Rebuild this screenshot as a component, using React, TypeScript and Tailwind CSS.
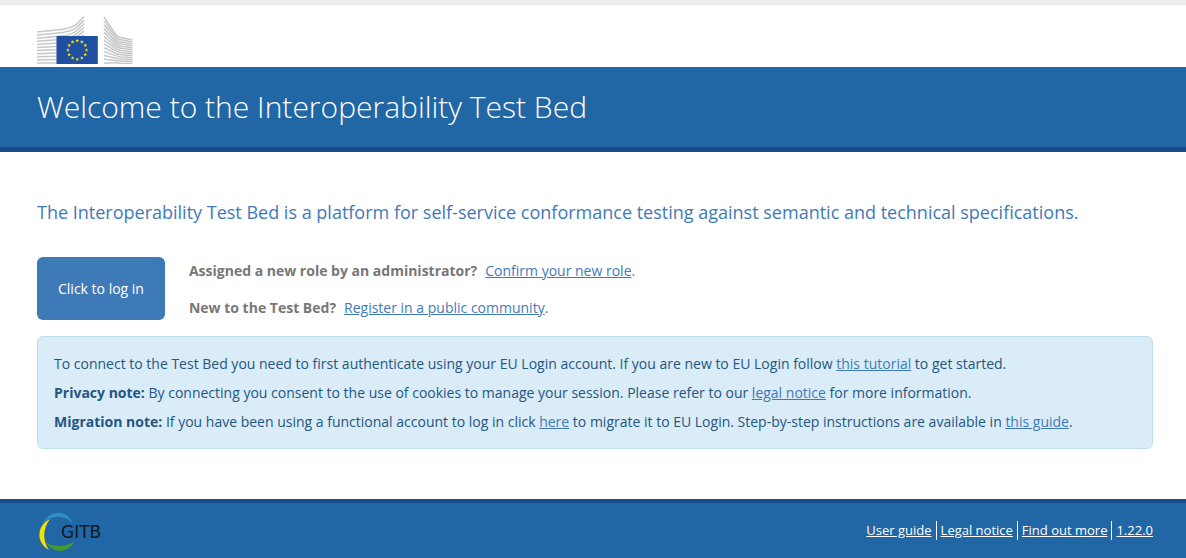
import React from 'react';

const leftLines = [0, 1, 2, 3, 4, 5, 6, 7, 8, 9, 10];
const rightLines = [0, 1, 2, 3, 4, 5, 6, 7, 8, 9, 10, 11, 12];
const stars = [0, 1, 2, 3, 4, 5, 6, 7, 8, 9, 10, 11];

const CommissionLogo: React.FC = () => (
    <svg width="96" height="48" viewBox="0 0 96 48" role="img" aria-label="European Commission">
        <g fill="none" stroke="#c6c7c8" strokeWidth="1.5">
            {leftLines.map((i) => {
                const y = 16 + i * 3.1;
                const end = 0.5 + i * 3.6;
                return (
                    <path key={i} d={`M0 ${y} L24 ${y - 2.6 + i * 0.25} C37 ${y - 4.2 + i * 0.4} 40 ${end + 8 - i * 0.6} 47 ${end}`} />
                );
            })}
            {rightLines.map((i) => {
                const y = 1 + i * 3.85;
                const end = 24 + i * 1.94;
                const bend = 21 + i * 2.15;
                return <path key={i} d={`M67 ${y} L77 ${bend - 5 + i * 0.42} Q80 ${bend} 84 ${bend + 0.6} L95.5 ${end}`} />;
            })}
        </g>
        <rect x="19.5" y="20" width="41.3" height="28" fill="#1f4fa0" />
        {stars.map((i) => {
            const angle = (i * Math.PI) / 6;
            const x = 40.2 + 9.3 * Math.sin(angle);
            const y = 34 - 9.3 * Math.cos(angle);
            return (
                <path
                    key={i}
                    transform={`translate(${x} ${y})`}
                    fill="#f5e616"
                    d="M0-2 .5-.6H1.9L.8.3 1.2 1.7 0 .8-1.2 1.7-.8.3-1.9-.6H-.5Z"
                />
            );
        })}
    </svg>
);

const GitbLogo: React.FC = () => (
    <svg width="78" height="40" viewBox="0 0 78 40" role="img" aria-label="GITB">
        <path d="M5 13C13-2 30-2 36 13 28 3 14 4 5 13Z" fill="#328fc2" />
        <path d="M13 8C-1 15-1 32 12 39 5 29 6 17 13 8Z" fill="#f5e100" />
        <path d="M8 31C16 43 31 43 38 30 29 36 17 37 8 31Z" fill="#43992f" />
        <text x="24" y="27" fill="#111820" className="font-['DejaVu_Sans',sans-serif] text-[17px]">GITB</text>
    </svg>
);

const footerLinks = ['User guide', 'Legal notice', 'Find out more', '1.22.0'];

const TextLink: React.FC<{ children: React.ReactNode }> = ({ children }) => (
    <a href="#" className="text-[#3f7ab8] underline">{children}</a>
);

const App: React.FC = () => {
    return (
        <div className="flex min-h-screen flex-col bg-white font-['Open_Sans',sans-serif] text-sm text-[#777777]">
            <header>
                <div className="border-t-[5px] border-[#ededed] px-[37px] pt-[11px] pb-[3px]">
                    <div className="flex h-12">
                        <CommissionLogo />
                    </div>
                </div>
                <div className="border-b-[5px] border-[#1b4a8c] bg-[#2166a5] px-[37px] py-5">
                    <h1 className="text-[30px] leading-10 font-light text-white">Welcome to the Interoperability Test Bed</h1>
                </div>
            </header>

            <main className="flex-1 px-[37px] pt-12 pb-8 lg:pr-[33px]">
                <p className="text-lg leading-6 text-[#3f7ab8]">
                    The Interoperability Test Bed is a platform for self-service conformance testing against semantic and technical specifications.
                </p>

                {/* Login and account options */}
                <div className="mt-[33px] flex items-center gap-6">
                    <button type="button" className="shrink-0 rounded-md bg-[#3f7ab8] px-[21px] py-[21px] leading-[21px] font-medium text-white">
                        Click to log in
                    </button>
                    <div className="flex flex-col gap-4 leading-[21px]">
                        <p>
                            <strong className="mr-2">Assigned a new role by an administrator?</strong>
                            <TextLink>Confirm your new role</TextLink>.
                        </p>
                        <p>
                            <strong className="mr-2">New to the Test Bed?</strong>
                            <TextLink>Register in a public community</TextLink>.
                        </p>
                    </div>
                </div>

                {/* Notes */}
                <div className="mt-4 rounded-md border border-[#bfdff0] bg-[#daecf8] px-4 py-3 leading-[29px] text-[#245682]">
                    <p>
                        To connect to the Test Bed you need to first authenticate using your EU Login account. If you are new to EU Login follow <TextLink>this tutorial</TextLink> to get started.
                    </p>
                    <p>
                        <strong>Privacy note:</strong> By connecting you consent to the use of cookies to manage your session. Please refer to our <TextLink>legal notice</TextLink> for more information.
                    </p>
                    <p>
                        <strong>Migration note:</strong> If you have been using a functional account to log in click <TextLink>here</TextLink> to migrate it to EU Login. Step-by-step instructions are available in <TextLink>this guide</TextLink>.
                    </p>
                </div>
            </main>

            <footer className="flex items-center justify-between border-t-4 border-[#1b4a8c] bg-[#2166a5] py-[7px] pr-[29px] pl-[37px]">
                <div className="flex h-[41px] items-center">
                    <GitbLogo />
                </div>
                <nav className="flex divide-x divide-white text-[13px] leading-[19px] text-white">
                    {footerLinks.map((label) => (
                        <a key={label} href="#" className="px-1 underline">{label}</a>
                    ))}
                </nav>
            </footer>
        </div>
    );
};

export default App;
